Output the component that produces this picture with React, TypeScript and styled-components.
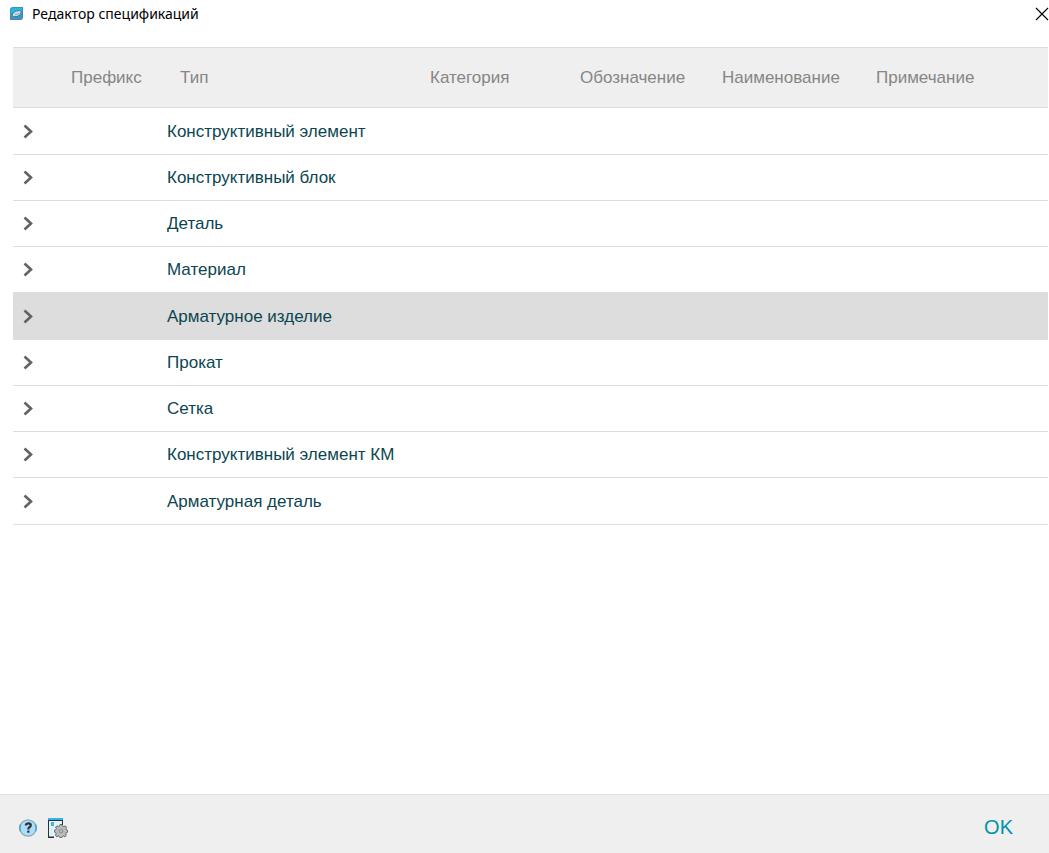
import React, { useState } from "react";
import styled, { createGlobalStyle } from "styled-components";

const GlobalStyle = createGlobalStyle`
  *, *::before, *::after { box-sizing: border-box; }
  body { margin: 0; background: #fff; font-family: "Liberation Sans", Arial, sans-serif; }
  button { font: inherit; border: 0; padding: 0; background: none; cursor: pointer; }
`;

const Window = styled.div`
  display: flex;
  flex-direction: column;
  min-height: 100vh;
`;

const TitleBar = styled.header`
  display: flex;
  align-items: center;
  gap: 8px;
  height: 27px;
  padding-left: 10px;
  margin-bottom: 20px;
`;

const Title = styled.h1`
  flex: 1;
  margin: 0;
  font: 400 14px/20px "Noto Sans", "Segoe UI", sans-serif;
  color: #000;
`;

const CloseButton = styled.button`
  display: flex;
  width: 14px;
  height: 14px;
`;

const Content = styled.main`
  flex: 1;
  padding: 0 1px 24px 13px;
`;

const Table = styled.table`
  width: 100%;
  table-layout: fixed;
  border-collapse: separate;
  border-spacing: 0;
  font-size: 17px;
  line-height: 20px;
`;

const Column = styled.col<{ $width?: number }>`
  width: ${({ $width }) => ($width ? `${$width}px` : "auto")};
`;

const HeadCell = styled.th`
  height: 61px;
  padding: 0 0 0 13px;
  background: #efefef;
  border-top: 1px solid #dedede;
  border-bottom: 1px solid #dedede;
  color: #868686;
  font-weight: 400;
  text-align: left;
`;

const Cell = styled.td`
  padding: 0;
  border-bottom: 1px solid #dedede;
`;

const Row = styled.tr<{ $selected: boolean }>`
  height: 46px;
  color: #0b4650;
  background: ${({ $selected }) => ($selected ? "#dddddd" : "#fff")};

  &:nth-child(4n + 1) {
    height: 47px;
  }

  &:nth-child(4n + 1) > ${Cell} {
    padding-top: 1px;
  }
`;

const ExpandButton = styled.button`
  display: flex;
  margin-left: 9px;
`;

const Footer = styled.footer`
  display: flex;
  align-items: center;
  justify-content: space-between;
  height: 59px;
  padding: 6px 36px 0 18px;
  background: #efefef;
  border-top: 1px solid #dedede;
`;

const Tools = styled.div`
  display: flex;
  gap: 10px;
  padding-top: 2px;
`;

const IconButton = styled.button`
  display: flex;
`;

const OkButton = styled.button`
  color: #0093a7;
  font-size: 20px;
  line-height: 24px;
`;

const AppIcon = () => (
  <svg width="14" height="14" viewBox="0 0 14 14" aria-hidden="true">
    <path d="M3.500 0H13V10Q13 13 10 13H0V3.500Q0 0 3.500 0Z" fill="#3f93c6" />
    <path d="M3.500 0H13V5L0 6V3.500Q0 0 3.500 0Z" fill="#25b9dc" />
    <path d="M3.500 .5H12.500V10Q12.500 12.500 10 12.500H.5V3.500Q.5.500 3.500.5Z" fill="none" stroke="#4b86a6" strokeWidth=".8" />
    <path d="M2 8.500Q2.500 5 6 4q4-1 5.500.5Q11 8.500 7 9.500q-4 .8-5-1Z" fill="#c4dfe8" stroke="#2d6784" strokeWidth=".8" />
    <path d="M4.500 7.500Q6 5.500 9 6Q8 8 4.500 7.500Z" fill="#2f6f88" />
    <path d="M5.500 7L8 6.300" stroke="#eef7f8" fill="none" strokeWidth=".8" />
  </svg>
);

const CloseIcon = () => (
  <svg width="14" height="14" viewBox="0 0 14 14" aria-hidden="true">
    <path d="M1 1L13 13M13 1L1 13" stroke="#000" strokeWidth="1.200" />
  </svg>
);

const ChevronIcon = () => (
  <svg width="12" height="15" viewBox="0 0 12 15" aria-hidden="true">
    <path d="M2.500 1.500L9 7.500L2.500 13.500" fill="none" stroke="#626262" strokeWidth="2.600" />
  </svg>
);

const HelpIcon = () => (
  <svg width="20" height="20" viewBox="0 0 20 20" aria-hidden="true">
    <circle cx="10" cy="10" r="8.200" fill="#a9defc" stroke="#8fa9b5" strokeWidth="1.200" />
    <path d="M2.500 6.500A8.200 8.200 0 0 0 2.500 13.500M17.500 6.500A8.200 8.200 0 0 1 17.500 13.500" fill="none" stroke="#4f9dbb" strokeWidth="1.400" />
    <path d="M8 7.500V6.500Q8.500 5.300 10.400 5.300Q12.800 5.300 12.800 7.200Q12.800 8.500 11.400 9.300Q10.300 10 10.300 11.500" fill="none" stroke="#303236" strokeWidth="2.200" />
    <path d="M9.200 12.600h2.300v2.100H9.200z" fill="#303236" />
  </svg>
);

const SettingsIcon = () => (
  <svg width="20" height="20" viewBox="0 0 20 20" aria-hidden="true">
    <path d="M1 3H14V19H1Z" fill="#e0f4fc" />
    <path d="M0 0H15V2H0Z" fill="#36b2e9" />
    <path d="M0 2H15V3H1V18.500H6V20H0Z" fill="#2c3133" />
    <path d="M14 3H15V7H14Z" fill="#2c3133" />
    <path d="M3 4H6V8H3Z" fill="#43b5e5" />
    <path d="M3 11H5V12H3ZM3 15H5V16H3Z" fill="#c4e4ef" />
    <path d="M12 6.500h2l.5 1.600 1.300.6 1.500-.8 1.300 1.400-.7 1.500.4 1.100 1.200.4v1.900l-1.400.5-.5 1.200.7 1.500-1.400 1.300-1.500-.7-1.100.5-.5 1.100h-1.900l-.5-1.200-1.100-.5-1.500.8L7.400 17.300l.8-1.500-.5-1.200-1.200-.5v-1.900l1.400-.5.5-1-.8-1.500 1.300-1.300 1.500.7 1.100-.5Z" fill="#bdbdbd" stroke="#5a5a5a" strokeWidth=".9" />
    <circle cx="13" cy="13" r="1.900" fill="#e4e4e4" stroke="#747474" strokeWidth=".8" />
    <path d="M12.500 12.500h1v1h-1z" fill="#333" />
  </svg>
);

const columns = ["Префикс", "Тип", "Категория", "Обозначение", "Наименование", "Примечание"];

const types = [
  "Конструктивный элемент",
  "Конструктивный блок",
  "Деталь",
  "Материал",
  "Арматурное изделие",
  "Прокат",
  "Сетка",
  "Конструктивный элемент КМ",
  "Арматурная деталь",
];

export default function App() {
  const [selected, setSelected] = useState(4);

  return (
    <Window>
      <GlobalStyle />
      <TitleBar>
        <AppIcon />
        <Title>Редактор спецификаций</Title>
        <CloseButton type="button" aria-label="Закрыть"><CloseIcon /></CloseButton>
      </TitleBar>
      <Content>
        <Table>
          <colgroup>
            <Column $width={45} />
            <Column $width={109} />
            <Column $width={250} />
            <Column $width={150} />
            <Column $width={142} />
            <Column $width={154} />
            <Column />
          </colgroup>
          <thead>
            <tr>
              <HeadCell />
              {columns.map((name) => <HeadCell key={name} scope="col">{name}</HeadCell>)}
            </tr>
          </thead>
          <tbody>
            {types.map((type, index) => (
              <Row key={type} $selected={index === selected} onClick={() => setSelected(index)}>
                <Cell>
                  <ExpandButton type="button" aria-label={`Развернуть: ${type}`}><ChevronIcon /></ExpandButton>
                </Cell>
                <Cell />
                <Cell>{type}</Cell>
                <Cell />
                <Cell />
                <Cell />
                <Cell />
              </Row>
            ))}
          </tbody>
        </Table>
      </Content>
      <Footer>
        <Tools>
          <IconButton type="button" aria-label="Справка"><HelpIcon /></IconButton>
          <IconButton type="button" aria-label="Настройки"><SettingsIcon /></IconButton>
        </Tools>
        <OkButton type="button">OK</OkButton>
      </Footer>
    </Window>
  );
}
